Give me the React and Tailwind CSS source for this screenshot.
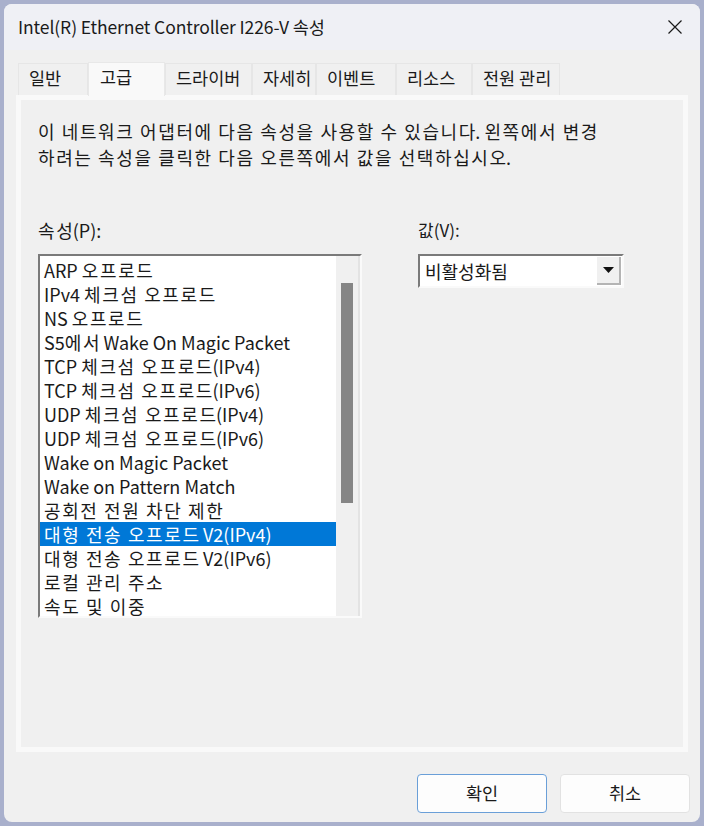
import React, { useState } from "react";

const items = [
  "ARP 오프로드",
  "IPv4 체크섬 오프로드",
  "NS 오프로드",
  "S5에서 Wake On Magic Packet",
  "TCP 체크섬 오프로드(IPv4)",
  "TCP 체크섬 오프로드(IPv6)",
  "UDP 체크섬 오프로드(IPv4)",
  "UDP 체크섬 오프로드(IPv6)",
  "Wake on Magic Packet",
  "Wake on Pattern Match",
  "공회전 전원 차단 제한",
  "대형 전송 오프로드 V2(IPv4)",
  "대형 전송 오프로드 V2(IPv6)",
  "로컬 관리 주소",
  "속도 및 이중",
];

const tabs = [
  { label: "일반", w: "w-[70px]" },
  { label: "고급", w: "w-[77px]" },
  { label: "드라이버", w: "w-[87px]" },
  { label: "자세히", w: "w-[64px]" },
  { label: "이벤트", w: "w-[80px]" },
  { label: "리소스", w: "w-[76px]" },
  { label: "전원 관리", w: "w-[88px]" },
];

// hangul glyphs in the dialog font run wider than in Noto, so space them out a bit
const Wide = ({ text }) =>
  text.split(/([가-힣][가-힣 ]*[가-힣]|[가-힣])/).map((part, i) =>
    /[가-힣]/.test(part) ? (
      <span key={i}>
        <span className="tracking-[1.6px]">{part.slice(0, -1)}</span>
        {part.slice(-1)}
      </span>
    ) : (
      <span key={i}>{part}</span>
    )
  );

const App = () => {
  const [selected, setSelected] = useState(11);
  const [tab, setTab] = useState(1);

  return (
    <div
      className="w-[704px] h-[826px] bg-[#a9b0cc] p-[4px] text-[#1a1a1a]"
      style={{ fontFamily: '"Noto Sans CJK KR", "Noto Sans", sans-serif' }}
    >
      <div className="w-[696px] h-[818px] rounded-[8px] bg-[#f0f0f0] overflow-hidden flex flex-col">
        {/* title bar */}
        <div className="h-[46px] bg-[#eff0f5] flex items-center justify-between pl-[14px] pr-[16px]">
          <span className="text-[17.5px] tracking-[-0.1px]">Intel(R) Ethernet Controller I226-V 속성</span>
          <svg width="16" height="16" viewBox="0 0 16 16" className="mr-[1px]">
            <path d="M1.5 1.5 L14.5 14.5 M14.5 1.5 L1.5 14.5" stroke="#1a1a1a" strokeWidth="1.2" fill="none" />
          </svg>
        </div>

        {/* tabs */}
        <div className="flex items-end h-[45px] pl-[14px]">
          {tabs.map((t, i) =>
            i === tab ? (
              <div
                key={t.label}
                onClick={() => setTab(i)}
                className={`${t.w} h-[34px] -mb-[1px] z-10 bg-[#f9f9f9] border border-b-0 border-[#e8e8e8] text-[17.5px] pl-[11px] pt-[1px] cursor-default`}
              >
                {t.label}
              </div>
            ) : (
              <div
                key={t.label}
                onClick={() => setTab(i)}
                className={`${t.w} h-[32px] border border-b-0 border-[#e6e6e6] text-[17.5px] pl-[10px] pt-[1px] cursor-default`}
              >
                {t.label}
              </div>
            )
          )}
        </div>

        {/* panel */}
        <div className="mx-[12px] h-[657px] border-[5px] border-[#f9f9f9] bg-[#f0f0f0] pl-[17px] pr-[10px] pt-[18px]">
          <p className="text-[18px] leading-[26px] whitespace-nowrap">
            <Wide text="이 네트워크 어댑터에 다음 속성을 사용할 수 있습니다. 왼쪽에서 변경" />
            <br />
            <Wide text="하려는 속성을 클릭한 다음 오른쪽에서 값을 선택하십시오." />
          </p>

          <div className="flex mt-[48px]">
            <div className="w-[324px]">
              <div className="text-[18px] leading-[24px] mb-[12px]">
                <Wide text="속성(P):" />
              </div>
              <div className="h-[364px] border-t-2 border-l-2 border-t-[#7a7a7a] border-l-[#7a7a7a] border-b-2 border-r-2 border-b-[#fafafa] border-r-[#fafafa] bg-white flex">
                <div className="flex-1 pt-[2px]">
                  {items.map((it, i) => (
                    <div
                      key={it}
                      onClick={() => setSelected(i)}
                      className={`h-[24px] leading-[24px] pl-[4px] text-[18px] whitespace-nowrap cursor-default ${
                        i === selected ? "bg-[#0078d7] text-white" : ""
                      }`}
                    >
                      <Wide text={it} />
                    </div>
                  ))}
                </div>
                <div className="w-[24px] bg-[#f0f0f0] pt-[27px] pl-[5px] pr-[5px] border-r-[2px] border-[#e3e3e3]">
                  <div className="h-[220px] bg-[#858585]" />
                </div>
              </div>
            </div>

            <div className="ml-[56px]">
              <div className="text-[17px] leading-[24px] mb-[12px]">값(V):</div>
              <div className="w-[206px] h-[34px] border-t-2 border-l-2 border-t-[#7a7a7a] border-l-[#7a7a7a] border-b-2 border-r-2 border-b-[#fafafa] border-r-[#fafafa] bg-white flex items-center">
                <span className="flex-1 pl-[5px] text-[18px]">비활성화됨</span>
                <div className="w-[24px] h-[28px] mr-[1px] bg-[#f0f0f0] border-r-2 border-b-2 border-[#b4b4b4] flex items-center justify-center">
                  <svg width="11" height="6" viewBox="0 0 11 6">
                    <path d="M0 0 L11 0 L5.5 6 Z" fill="#111" />
                  </svg>
                </div>
              </div>
            </div>
          </div>
        </div>

        {/* buttons */}
        <div className="flex justify-end gap-[13px] pr-[10px] mt-[22px]">
          <button className="w-[130px] h-[39px] rounded-[4px] border border-[#6a9fd8] bg-[#fdfdfd] text-[17.5px]">
            확인
          </button>
          <button className="w-[130px] h-[39px] rounded-[4px] border border-[#e2e2e2] bg-[#fdfdfd] text-[17.5px]">
            취소
          </button>
        </div>
      </div>
    </div>
  );
};

export default App;
